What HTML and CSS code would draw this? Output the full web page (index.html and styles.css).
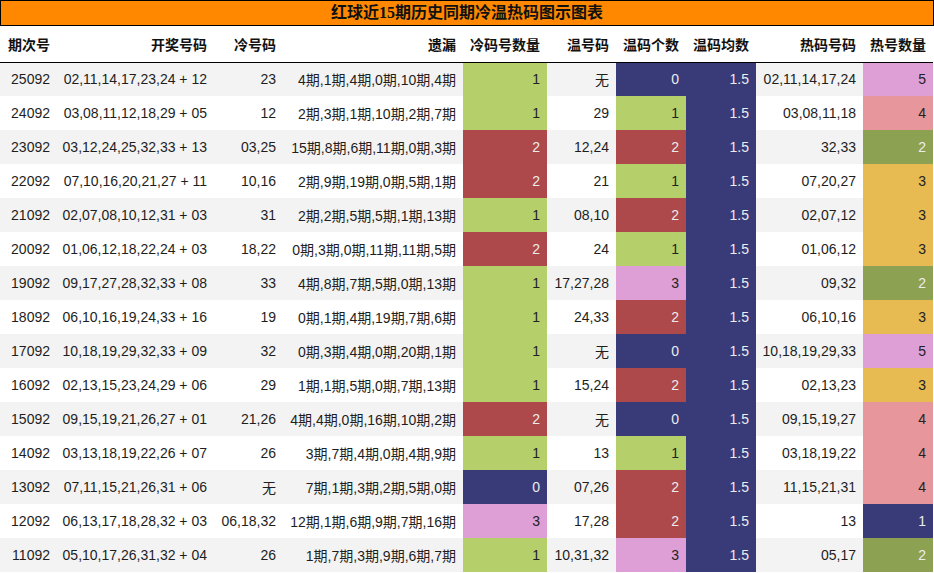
FILE: index.html
```html
<!DOCTYPE html>
<html lang="zh">
<head>
<meta charset="utf-8">
<title>红球近15期历史同期冷温热码图示图表</title>
<link rel="stylesheet" href="styles.css">
</head>
<body>
<div class="chart">
  <div class="title">红球近15期历史同期冷温热码图示图表</div>
  <table class="grid">
    <colgroup>
      <col class="w-issue"><col class="w-draw"><col class="w-cold"><col class="w-miss"><col class="w-coldn"><col class="w-warm"><col class="w-warmn"><col class="w-avg"><col class="w-hot"><col class="w-hotn">
    </colgroup>
    <thead>
      <tr><th>期次号</th><th>开奖号码</th><th>冷号码</th><th>遗漏</th><th>冷码号数量</th><th>温号码</th><th>温码个数</th><th>温码均数</th><th>热码号码</th><th>热号数量</th></tr>
    </thead>
    <tbody>
      <tr><td>25092</td><td>02,11,14,17,23,24 + 12</td><td>23</td><td>4期,1期,4期,0期,10期,4期</td><td class="c1">1</td><td>无</td><td class="c0">0</td><td class="avg">1.5</td><td>02,11,14,17,24</td><td class="h5">5</td></tr>
      <tr><td>24092</td><td>03,08,11,12,18,29 + 05</td><td>12</td><td>2期,3期,1期,10期,2期,7期</td><td class="c1">1</td><td>29</td><td class="c1">1</td><td class="avg">1.5</td><td>03,08,11,18</td><td class="h4">4</td></tr>
      <tr><td>23092</td><td>03,12,24,25,32,33 + 13</td><td>03,25</td><td>15期,8期,6期,11期,0期,3期</td><td class="c2">2</td><td>12,24</td><td class="c2">2</td><td class="avg">1.5</td><td>32,33</td><td class="h2">2</td></tr>
      <tr><td>22092</td><td>07,10,16,20,21,27 + 11</td><td>10,16</td><td>2期,9期,19期,0期,5期,1期</td><td class="c2">2</td><td>21</td><td class="c1">1</td><td class="avg">1.5</td><td>07,20,27</td><td class="h3">3</td></tr>
      <tr><td>21092</td><td>02,07,08,10,12,31 + 03</td><td>31</td><td>2期,2期,5期,5期,1期,13期</td><td class="c1">1</td><td>08,10</td><td class="c2">2</td><td class="avg">1.5</td><td>02,07,12</td><td class="h3">3</td></tr>
      <tr><td>20092</td><td>01,06,12,18,22,24 + 03</td><td>18,22</td><td>0期,3期,0期,11期,11期,5期</td><td class="c2">2</td><td>24</td><td class="c1">1</td><td class="avg">1.5</td><td>01,06,12</td><td class="h3">3</td></tr>
      <tr><td>19092</td><td>09,17,27,28,32,33 + 08</td><td>33</td><td>4期,8期,7期,5期,0期,13期</td><td class="c1">1</td><td>17,27,28</td><td class="c3">3</td><td class="avg">1.5</td><td>09,32</td><td class="h2">2</td></tr>
      <tr><td>18092</td><td>06,10,16,19,24,33 + 16</td><td>19</td><td>0期,1期,4期,19期,7期,6期</td><td class="c1">1</td><td>24,33</td><td class="c2">2</td><td class="avg">1.5</td><td>06,10,16</td><td class="h3">3</td></tr>
      <tr><td>17092</td><td>10,18,19,29,32,33 + 09</td><td>32</td><td>0期,3期,4期,0期,20期,1期</td><td class="c1">1</td><td>无</td><td class="c0">0</td><td class="avg">1.5</td><td>10,18,19,29,33</td><td class="h5">5</td></tr>
      <tr><td>16092</td><td>02,13,15,23,24,29 + 06</td><td>29</td><td>1期,1期,5期,0期,7期,13期</td><td class="c1">1</td><td>15,24</td><td class="c2">2</td><td class="avg">1.5</td><td>02,13,23</td><td class="h3">3</td></tr>
      <tr><td>15092</td><td>09,15,19,21,26,27 + 01</td><td>21,26</td><td>4期,4期,0期,16期,10期,2期</td><td class="c2">2</td><td>无</td><td class="c0">0</td><td class="avg">1.5</td><td>09,15,19,27</td><td class="h4">4</td></tr>
      <tr><td>14092</td><td>03,13,18,19,22,26 + 07</td><td>26</td><td>3期,7期,4期,0期,4期,9期</td><td class="c1">1</td><td>13</td><td class="c1">1</td><td class="avg">1.5</td><td>03,18,19,22</td><td class="h4">4</td></tr>
      <tr><td>13092</td><td>07,11,15,21,26,31 + 06</td><td>无</td><td>7期,1期,3期,2期,5期,0期</td><td class="c0">0</td><td>07,26</td><td class="c2">2</td><td class="avg">1.5</td><td>11,15,21,31</td><td class="h4">4</td></tr>
      <tr><td>12092</td><td>06,13,17,18,28,32 + 03</td><td>06,18,32</td><td>12期,1期,6期,9期,7期,16期</td><td class="c3">3</td><td>17,28</td><td class="c2">2</td><td class="avg">1.5</td><td>13</td><td class="h1">1</td></tr>
      <tr><td>11092</td><td>05,10,17,26,31,32 + 04</td><td>26</td><td>1期,7期,3期,9期,6期,7期</td><td class="c1">1</td><td>10,31,32</td><td class="c3">3</td><td class="avg">1.5</td><td>05,17</td><td class="h2">2</td></tr>
    </tbody>
  </table>
</div>
</body>
</html>
```

FILE: styles.css
```css
html, body {
  margin: 0;
  padding: 0;
  background: #ffffff;
}

.chart {
  width: 934px;
  font-family: "Liberation Sans", "Noto Sans CJK SC", sans-serif;
  color: #1e1e1e;
}

.title {
  box-sizing: border-box;
  width: 934px;
  height: 26px;
  border: 1px solid #000;
  background: #ff8800;
  color: #111;
  font-family: "Liberation Serif", "Noto Sans CJK SC", serif;
  font-weight: bold;
  font-size: 16px;
  line-height: 24px;
  text-align: center;
}

.grid {
  width: 933px;
  table-layout: fixed;
  border-collapse: collapse;
  border-spacing: 0;
  font-size: 14px;
}

.w-issue { width: 57px; }
.w-draw { width: 157px; }
.w-cold { width: 69px; }
.w-miss { width: 180px; }
.w-coldn { width: 84px; }
.w-warm { width: 69px; }
.w-warmn { width: 70px; }
.w-avg { width: 70px; }
.w-hot { width: 107px; }
.w-hotn { width: 70px; }

.grid th,
.grid td {
  padding: 0 7px 0 0;
  text-align: right;
  white-space: nowrap;
  overflow: hidden;
}

.grid th {
  box-sizing: border-box;
  height: 36px;
  font-family: "Noto Sans CJK SC", sans-serif;
  font-weight: bold;
  font-size: 14px;
  color: #111;
  border-bottom: 1px solid #000;
  vertical-align: middle;
  padding-top: 1px;
}

.grid td {
  box-sizing: border-box;
  height: 34px;
  vertical-align: middle;
}

.grid tbody tr:nth-child(odd) {
  background: #f3f3f3;
}

.grid tbody tr:nth-child(even) {
  background: #ffffff;
}

.c0 { background: #393b79; color: #ececec; }
.c1 { background: #b5cf6b; color: #222; }
.c2 { background: #ad494a; color: #ececec; }
.c3 { background: #de9ed6; color: #222; }
.avg { background: #393b79; color: #ececec; }

.h1 { background: #393b79; color: #ececec; }
.h2 { background: #8ca252; color: #ececec; }
.h3 { background: #e7ba52; color: #222; }
.h4 { background: #e7969c; color: #222; }
.h5 { background: #de9ed6; color: #222; }
```
